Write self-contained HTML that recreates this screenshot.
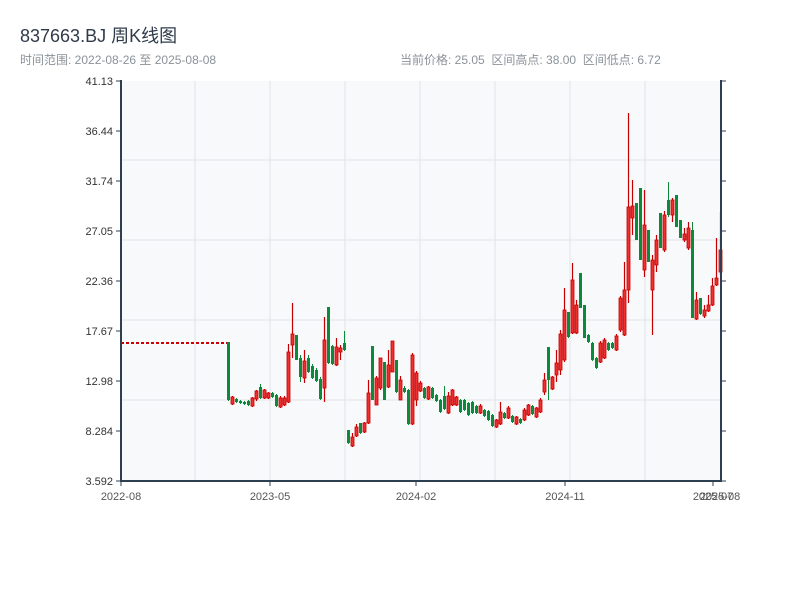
<!DOCTYPE html>
<html><head><meta charset="utf-8"><style>
body{margin:0;width:800px;height:600px;background:#fff;overflow:hidden;font-family:"Liberation Sans","Noto Sans CJK SC",sans-serif}
.t{position:absolute;left:20px;top:22px;font-size:18px;color:#2f3b4a}
.s{position:absolute;top:51px;font-size:12px;color:#8a9299}
</style></head><body>
<div class="t">837663.BJ 周K线图</div>
<div class="s" style="left:20px">时间范围: 2022-08-26 至 2025-08-08</div>
<div class="s" style="left:400px">当前价格: 25.05 &nbsp;区间高点: 38.00 &nbsp;区间低点: 6.72</div>
<svg id="c" width="800" height="600" style="position:absolute;left:0;top:0" font-family="Liberation Sans, sans-serif" font-size="11" fill="#333">
<rect x="121" y="81" width="600" height="400" fill="#f7f9fb"/>
<g stroke="#e1e4e8" stroke-width="1">
<line x1="121" y1="160" x2="721" y2="160"/><line x1="121" y1="240" x2="721" y2="240"/><line x1="121" y1="320" x2="721" y2="320"/><line x1="121" y1="400" x2="721" y2="400"/>
<line x1="195" y1="81" x2="195" y2="481"/><line x1="270" y1="81" x2="270" y2="481"/><line x1="345" y1="81" x2="345" y2="481"/><line x1="420" y1="81" x2="420" y2="481"/><line x1="495" y1="81" x2="495" y2="481"/><line x1="570" y1="81" x2="570" y2="481"/><line x1="645" y1="81" x2="645" y2="481"/>
</g>
<line x1="121" y1="343" x2="228" y2="343" stroke="#c00" stroke-width="2" stroke-dasharray="3,2"/>
<g id="k"></g>
<g stroke="#2c3e50" stroke-width="2" fill="none">
<line x1="121" y1="80" x2="121" y2="482"/><line x1="120" y1="481" x2="722" y2="481"/><line x1="721" y1="80" x2="721" y2="482"/>
</g>
<g stroke="#2c3e50" stroke-width="1" id="tk"></g>
<g text-anchor="end" fill="#333" id="yl"></g>
<g text-anchor="middle" fill="#555">
<text x="121" y="500">2022-08</text><text x="270" y="500">2023-05</text><text x="416" y="500">2024-02</text><text x="565" y="500">2024-11</text><text x="713" y="500">2025-07</text><text x="720" y="500">2025-08</text>
</g>
</svg>
<script>
var ns="http://www.w3.org/2000/svg";
function el(t,a,p){var e=document.createElementNS(ns,t);for(var k in a)e.setAttribute(k,a[k]);p.appendChild(e);return e;}
var labs=["41.13","36.44","31.74","27.05","22.36","17.67","12.98","8.284","3.592"];
var tk=document.getElementById("tk"),yl=document.getElementById("yl");
for(var i=0;i<9;i++){var y=81+i*50;el("line",{x1:116,y1:y,x2:121,y2:y},tk);el("line",{x1:721,y1:y,x2:726,y2:y},tk);var t=el("text",{x:113,y:y+4},yl);t.textContent=labs[i];}
el("line",{x1:121,y1:481,x2:121,y2:486},tk);el("line",{x1:270,y1:481,x2:270,y2:486},tk);el("line",{x1:416,y1:481,x2:416,y2:486},tk);el("line",{x1:565,y1:481,x2:565,y2:486},tk);el("line",{x1:713,y1:481,x2:713,y2:486},tk);
// x, wickTop, wickBot, bodyTop, bodyBot, color(r/g)
var d=[
[228,342,401,342,400,'g'],[232,396,405,397,404,'r'],[236,398,403,399,402,'g'],[240,400,404,401,403,'g'],[244,401,405,402,404,'g'],[248,400,406,401,405,'g'],[252,397,407,398,406,'r'],[256,390,401,391,399,'r'],[260,384,399,387,398,'g'],[264,389,399,390,398,'r'],[268,392,399,393,398,'r'],[272,392,398,393,397,'g'],[276,394,407,395,406,'g'],[280,396,408,398,407,'r'],[284,396,406,398,405,'r'],[288,344,403,352,402,'r'],[292,303,358,334,345,'r'],[296,335,360,335,360,'g'],[300,355,382,358,377,'g'],[304,350,383,361,378,'r'],[308,355,373,358,372,'g'],[312,364,379,366,378,'g'],[316,368,382,370,381,'g'],[320,377,400,379,399,'g'],[324,317,402,340,388,'r'],[328,307,364,307,363,'g'],[332,345,365,346,364,'g'],[336,338,366,347,365,'r'],[340,345,360,348,352,'r'],[344,331,351,343,350,'g'],
[348,430,444,430,443,'g'],[352,433,447,437,446,'r'],[356,424,437,427,436,'r'],[360,423,434,423,433,'g'],[364,422,433,423,432,'r'],[368,380,424,393,423,'r'],[372,346,400,346,400,'g'],[376,376,405,378,405,'r'],[380,358,390,358,388,'r'],[384,362,400,362,400,'g'],[388,350,388,365,387,'r'],[392,341,372,341,372,'r'],[396,360,393,360,392,'g'],[400,376,400,380,400,'r'],[404,386,393,388,392,'g'],[408,389,425,390,424,'g'],[412,353,425,355,424,'r'],[416,371,406,373,400,'r'],[420,381,392,383,391,'r'],[424,387,399,388,398,'g'],[428,386,400,387,399,'r'],[432,387,399,388,398,'g'],[436,394,402,395,401,'g'],[440,399,413,400,412,'g'],[444,386,410,396,409,'g'],[448,392,414,396,413,'r'],[452,389,406,390,405,'r'],[456,396,406,397,405,'r'],[460,399,413,400,412,'g'],[464,399,411,400,410,'g'],[468,402,416,403,415,'g'],[472,401,414,402,413,'g'],[476,405,414,406,413,'g'],[480,404,414,406,413,'r'],[484,409,417,410,416,'g'],[488,410,421,411,420,'g'],[492,414,427,415,426,'g'],[496,419,428,420,427,'r'],[500,402,425,412,424,'r'],[504,412,419,413,418,'g'],[508,406,419,408,418,'r'],[512,415,423,416,422,'g'],[516,416,425,417,424,'r'],[520,418,424,419,423,'g'],[524,408,421,410,420,'r'],[528,404,416,405,415,'r'],[532,405,415,406,414,'g'],[536,407,418,408,417,'r'],[540,398,413,400,412,'r'],[544,373,395,380,392,'r'],[548,347,400,347,380,'g'],[552,376,390,377,389,'r'],[556,350,382,363,375,'r'],[560,330,375,334,370,'r'],[564,288,362,310,360,'r'],[568,312,338,312,337,'g'],[572,263,334,280,333,'r'],[576,300,334,305,333,'r'],[580,273,308,273,308,'g'],[584,305,338,305,338,'g'],[588,334,343,335,342,'g'],[592,342,361,343,360,'g'],[596,357,369,358,368,'g'],[600,341,363,343,362,'r'],[604,338,359,340,358,'r'],[608,342,351,343,350,'g'],[612,342,349,343,348,'g'],[616,334,351,336,350,'r'],[620,296,332,298,330,'r'],[624,262,336,290,335,'r'],[628,113,303,207,290,'r'],[632,180,235,206,218,'r'],[636,203,240,203,240,'g'],[640,188,260,188,260,'g'],[644,190,277,225,270,'r'],[648,230,262,230,262,'g'],[652,255,335,260,290,'r'],[656,235,272,240,265,'r'],[660,213,248,213,248,'g'],[664,211,252,215,250,'r'],[668,182,217,200,215,'g'],[672,198,222,200,215,'r'],[676,195,227,195,227,'g'],[680,220,238,220,238,'g'],[684,228,242,234,240,'r'],[688,222,250,228,248,'r'],[692,222,318,230,318,'g'],[696,292,320,300,319,'r'],[700,298,315,298,314,'g'],[704,305,318,310,316,'r'],[708,295,312,305,311,'r'],[712,278,306,286,305,'r'],[716,238,286,278,285,'r'],[720,212,275,250,272,'r']
];
var g=document.getElementById("k");
d.forEach(function(c){var x=c[0];
if(c[5]=='g'){el("line",{x1:x+0.5,y1:c[1],x2:x+0.5,y2:c[2],stroke:"#0a8a3a","stroke-width":1},g);el("rect",{x:x-1,y:c[3],width:3,height:Math.max(1,c[4]-c[3]),fill:"#0a8a3a"},g);}
else{el("line",{x1:x+0.5,y1:c[1],x2:x+0.5,y2:c[2],stroke:"#c40000","stroke-width":1.2},g);el("rect",{x:x-1,y:c[3],width:3,height:Math.max(1,c[4]-c[3]),fill:"#f03030",stroke:"#c40000","stroke-width":0.8},g);}
});
</script>
</body></html>
